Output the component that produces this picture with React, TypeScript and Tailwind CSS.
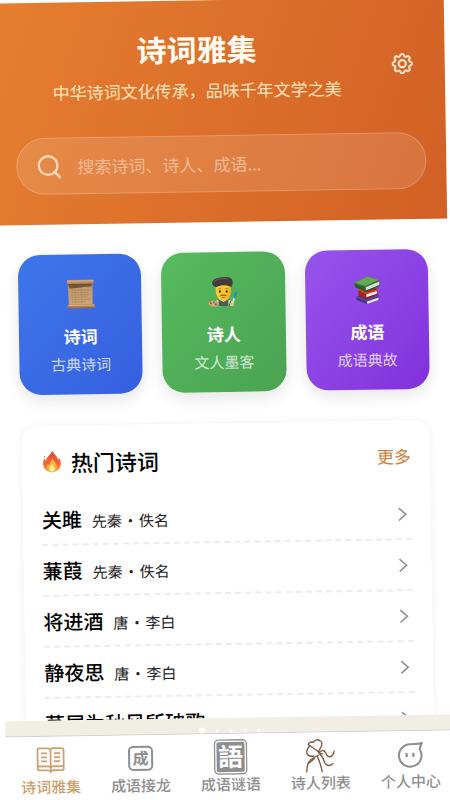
import type { ReactNode } from "react";
import { Search } from "lucide-react";
import { BsGear } from "react-icons/bs";

const ScrollIcon = () => (
  <svg viewBox="0 0 32 32" className="h-8 w-8" aria-hidden="true">
    <defs>
      <linearGradient id="paper" x1="0" y1="0" x2="0" y2="1">
        <stop offset="0" stopColor="#8a6642" />
        <stop offset="0.25" stopColor="#c39a6c" />
        <stop offset="1" stopColor="#cda478" />
      </linearGradient>
    </defs>
    <path d="M3.500 4h25l-.5 23H4.500z" fill="url(#paper)" />
    <path d="M4 5h24l-1 3.500c-8-.5-12 2-22 1.500z" fill="#5f432a" opacity=".75" />
    <rect x="2.500" y="1.500" width="27" height="4" rx="1.500" fill="#b98d60" />
    <path d="M3 2.700h26" stroke="#dcb68a" strokeWidth=".9" />
    <path
      d="M7 12h18M7 14.300h17M7 16.600h18M7 18.900h16M7 21.200h18M7 23.500h14"
      stroke="#8d6b48"
      strokeWidth=".5"
      strokeDasharray="2 .6 3 .7"
    />
    <rect x="3" y="26" width="27.500" height="4" rx="1.500" fill="#b48355" />
    <path d="M4 27h25.500" stroke="#e0b98d" strokeWidth=".9" />
    <path d="M3.500 29.600h26" stroke="#7b5637" strokeWidth=".7" />
  </svg>
);

const PainterIcon = () => (
  <svg viewBox="0 0 32 32" className="h-8 w-8" aria-hidden="true">
    <path d="M6 30c0-5 4-7 10-7s10 2 10 7z" fill="#dfe6e3" />
    <path d="M11 23l5 3 5-3v7H11z" fill="#47604f" />
    <path d="M8.500 25l2 5M23.500 25l-2 5" stroke="#56705f" strokeWidth="1.200" />
    <path d="M8.800 9c-1.500 8 .5 15 7.200 16C22.700 24 24.700 17 23.200 9z" fill="#fcc62f" />
    <path d="M21 9c1 6 0 12-4 16 6-1.500 7.500-8 6.200-16z" fill="#e99d1e" opacity=".5" />
    <path d="M11 13q1.500-1 3 0M18 13q1.500-1 3 0" fill="none" stroke="#8a5a1c" strokeWidth=".7" />
    <ellipse cx="12.600" cy="15.500" rx="1" ry="1.300" fill="#3c2614" />
    <ellipse cx="19.400" cy="15.500" rx="1" ry="1.300" fill="#3c2614" />
    <path d="M13 20q1.500-1.500 3-.7 1.500-.8 3 .7" fill="none" stroke="#7a4415" strokeWidth="1" />
    <path d="M14.500 21.800h3" stroke="#b0472c" strokeWidth=".9" />
    <path
      d="M5 6.500C5.500 3 11 1 17 1c6 0 9 2 8.500 6 0 2-.7 3.500-1.800 4.200C20 8.600 13 8.800 9.500 11 7 10.500 4.600 8.700 5 6.500z"
      fill="#443a3b"
    />
    <path d="M7 5.500c3-3 10-3.500 14-2.500" stroke="#6c6061" fill="none" />
    <ellipse cx="6" cy="27.500" rx="5" ry="3" fill="#d8a56b" />
    <circle cx="3.500" cy="27" r="1" fill="#d04031" />
    <circle cx="6.500" cy="26" r="1" fill="#4a82bd" />
    <circle cx="8.300" cy="28" r="1" fill="#6f4b8a" />
    <path d="M24.500 29.500l3-9" stroke="#dcecf2" strokeWidth="1.800" />
    <path d="M27.200 21.500l1.400-4.500" stroke="#3484c2" strokeWidth="2.200" strokeLinecap="round" />
    <circle cx="24.500" cy="28" r="1.700" fill="#f4bb3b" />
  </svg>
);

const BooksIcon = () => (
  <svg viewBox="0 0 32 32" className="h-8 w-8" aria-hidden="true">
    <path d="M6 23l9-4 13 3v4l-12 4-10-4z" fill="#45337f" />
    <path d="M16 28l12-4v2.500L17 30z" fill="#e8e4e2" />
    <path d="M6 23l10 3.500L28 22" fill="none" stroke="#6753a5" />
    <path d="M8 15l9-2 10 2v6.500L16 25 8 22z" fill="#a3241f" />
    <path d="M16 20.500l10.500-3v3.300L16 24z" fill="#efebe8" />
    <path d="M8 15.500l8 4 11-3.300" fill="none" stroke="#d94b38" strokeWidth="1.300" />
    <path d="M16 23.900l11-3.200" stroke="#7d1815" />
    <path d="M4 9L17.500 2.500 29 6.500v6L15.500 17.500 5 13.500z" fill="#275f2b" />
    <path d="M4 9L17.500 2.500 29 6.500 15 12.500z" fill="#65a955" />
    <path d="M15.500 13.500L29 8v3.500L16 16.500z" fill="#f0eeea" />
    <path d="M15.500 15.200L28.500 10" stroke="#b9b6b0" strokeWidth=".6" />
    <path d="M4 9l11 3.700v5" fill="none" stroke="#3f853b" />
    <path d="M15 17.600l14-5.300" stroke="#245728" />
  </svg>
);

const FlameIcon = () => (
  <svg viewBox="0 0 24 24" className="h-6 w-6" aria-hidden="true">
    <defs>
      <linearGradient id="flame" x1="0" y1="0" x2="0" y2="1">
        <stop offset="0" stopColor="#d9483a" />
        <stop offset="0.6" stopColor="#f0692f" />
        <stop offset="1" stopColor="#f9a23a" />
      </linearGradient>
    </defs>
    <path
      d="M11.500 1c1 3 5 5 5.800 9.500.6-.6.8-1.600.6-2.600 1.600 2 2.200 4.300 1.900 6.800-.5 4.600-4.200 7.800-8.800 7.800s-8.400-3-8.800-7.500C1.900 12 3 9.500 4 8.500c.1 1.300.4 2.300 1.200 3C5 7 9.800 5.500 11.500 1z"
      fill="url(#flame)"
    />
    <path d="M3 5.800c.8.200 1.200.8 1 1.700-.8-.3-1.200-.9-1-1.700z" fill="#e0543b" />
    <path
      d="M11.500 8c0 3 4.300 4.500 4.300 9 0 3.300-2.200 5-4.900 5s-5-1.800-5-4.700c0-1.500.5-2.600 1.200-3.400.2 1 .7 1.600 1.400 1.900-.4-3.300 2.700-4.300 3-7.800z"
      fill="#fbb53f"
    />
    <path d="M11 14c.3 2 2.400 2.600 2.400 5 0 1.900-1.100 2.800-2.500 2.800S8.300 20.800 8.300 19c0-2 2.400-2.700 2.700-5z" fill="#fff0a3" />
  </svg>
);

const BookNavIcon = () => (
  <svg viewBox="0 0 30 30" className="h-[30px] w-[30px]" fill="none" stroke="currentColor" strokeWidth="1.800" aria-hidden="true">
    <path d="M15 4.500v21M15 4.500q-1-1-2.500-1H3.500a1.500 1.500 0 0 0-1.500 1.500v19a1.500 1.500 0 0 0 1.500 1.500h8.700q2 0 2.800 1.500 .8-1.500 2.800-1.500h8.700a1.500 1.500 0 0 0 1.500-1.500v-19a1.500 1.500 0 0 0-1.500-1.500h-9q-1.500 0-2.500 1z" />
    <path d="M5.500 8.500h6M5.500 12.500h6M5.500 16.500h6M18.500 8.500h6M18.500 12.500h6M18.500 16.500h6M2 21.500h10q2 0 3 1 1-1 3-1h10" />
  </svg>
);

const ChengNavIcon = () => (
  <svg viewBox="0 0 28 28" className="h-7 w-7" fill="none" stroke="currentColor" aria-hidden="true">
    <rect x="2.500" y="2.500" width="23" height="23" rx="4" strokeWidth="2" />
    <text x="14" y="20" textAnchor="middle" fontSize="16" fontWeight="700" fill="currentColor" stroke="none">
      成
    </text>
  </svg>
);

const SealNavIcon = () => (
  <svg viewBox="0 0 34 36" className="h-9 w-[34px]" fill="none" stroke="currentColor" aria-hidden="true">
    <rect x="1" y="1" width="32" height="34" rx="4" strokeWidth="1.300" />
    <rect x="3" y="3" width="28" height="30" rx="2" fill="currentColor" stroke="none" />
    <text x="17" y="27" textAnchor="middle" fontSize="25" fontWeight="700" fill="#fff" stroke="none">
      語
    </text>
  </svg>
);

const PoetNavIcon = () => (
  <svg
    viewBox="50 50 90 102"
    className="h-[34px] w-[30px]"
    fill="none"
    stroke="#7d5640"
    strokeWidth="4"
    strokeLinecap="round"
    strokeLinejoin="round"
    aria-hidden="true"
  >
    <path d="M59 68C58 60 68 59 74 61C78 52 90 52 93 57C99 57 101 64 98 72C96 80 89 84 89 92" />
    <path d="M59 68L82 84C90 90 92 96 101 96" />
    <path d="M63 72C56 78 53 86 54 94C57 101 64 104 74 102" />
    <path d="M90 93C96 85 106 83 110 92C113 101 119 108 126 104C133 101 135 95 136 88" />
    <path d="M91 96C103 103 103 112 107 123C111 133 122 134 131 126" />
    <path d="M88 100C74 106 60 112 57 124C53 134 53 142 53 150" />
    <path d="M58 124L76 110" />
    <path d="M85 103C92 118 96 132 99 150" />
  </svg>
);

const ProfileNavIcon = () => (
  <svg
    viewBox="0 0 28 28"
    className="h-7 w-7"
    fill="none"
    stroke="currentColor"
    strokeWidth="2"
    strokeLinejoin="round"
    aria-hidden="true"
  >
    <path d="M13 4h5q4 0 7.500-1-1.500 2.500-2.500 6A11.300 11.300 0 1 1 13 4z" />
    <path d="M10 13.800v2M16.800 13.800v2" strokeWidth="2.400" strokeLinecap="round" />
  </svg>
);

const categories: { title: string; desc: string; icon: ReactNode; color: string }[] = [
  { title: "诗词", desc: "古典诗词", icon: <ScrollIcon />, color: "from-[#3f76ea] to-[#365fe0]" },
  { title: "诗人", desc: "文人墨客", icon: <PainterIcon />, color: "from-[#56bb5e] to-[#4aa352]" },
  { title: "成语", desc: "成语典故", icon: <BooksIcon />, color: "from-[#9853ec] to-[#8130dc]" },
];

const poems = [
  { title: "关雎", dynasty: "先秦", author: "佚名" },
  { title: "蒹葭", dynasty: "先秦", author: "佚名" },
  { title: "将进酒", dynasty: "唐", author: "李白" },
  { title: "静夜思", dynasty: "唐", author: "李白" },
  { title: "茅屋为秋风所破歌" },
];

const tabs = [
  { label: "诗词雅集", icon: <BookNavIcon />, active: true },
  { label: "成语接龙", icon: <ChengNavIcon /> },
  { label: "成语谜语", icon: <SealNavIcon /> },
  { label: "诗人列表", icon: <PoetNavIcon /> },
  { label: "个人中心", icon: <ProfileNavIcon /> },
];

const Header = () => (
  <header className="bg-linear-[110deg] from-[#e67f30] to-[#d26025] px-5 pt-[30px] pb-[30px]">
    <div className="flex items-center">
      <div className="flex-1 text-center">
        <h1 className="text-[30px] leading-9 font-bold text-[#fffaf2]">诗词雅集</h1>
        <p className="mt-3 text-[17px] leading-6 text-[#fde3bd]">中华诗词文化传承，品味千年文学之美</p>
      </div>
      <button type="button" aria-label="设置" className="flex h-12 w-[46px] items-center justify-center text-[#fff3e2]">
        <BsGear size={21} strokeWidth={0.5} />
      </button>
    </div>
    <form className="mt-[33px] flex h-[57px] items-center gap-3.5 rounded-full border border-white/20 bg-white/12 px-[18px]">
      <label htmlFor="search" aria-label="搜索" className="text-[#fad9bb]">
        <Search size={28} strokeWidth={2} />
      </label>
      <input
        id="search"
        type="search"
        placeholder="搜索诗词、诗人、成语..."
        className="min-w-0 flex-1 bg-transparent text-[17px] text-white outline-none placeholder:text-[#f3b995]"
      />
    </form>
  </header>
);

const Categories = () => (
  <div className="grid grid-cols-3 gap-5">
    {categories.map((item) => (
      <button
        key={item.title}
        type="button"
        className={`flex flex-col items-center rounded-[22px] bg-linear-to-br pt-6 pb-5 text-white shadow-[0_6px_16px_rgba(0,0,0,0.1)] ${item.color}`}
      >
        {item.icon}
        <span className="mt-3.5 text-[17px] leading-6 font-bold">{item.title}</span>
        <span className="mt-1.5 text-[15px] leading-5 text-white/75">{item.desc}</span>
      </button>
    ))}
  </div>
);

const PopularPoems = () => (
  <section className="mt-[30px] rounded-2xl border border-[#f7f7f8] bg-white px-[19px] pt-[18px] shadow-[0_2px_10px_rgba(0,0,0,0.05)]">
    <div className="flex items-center justify-between">
      <h2 className="flex items-center gap-1.5 text-[22px] leading-9 font-medium text-black">
        <FlameIcon />
        热门诗词
      </h2>
      <a href="#more" className="text-[17px] text-[#cf7f3c]">
        更多
      </a>
    </div>
    <ul className="mt-[15px]">
      {poems.map((poem) => (
        <li key={poem.title} className="border-b-2 border-dashed border-[#ececec]">
          <a href="#poem" className="flex h-[49px] items-center justify-between">
            <span className="flex items-baseline gap-2.5 text-black">
              <span className="text-[20px] font-medium">{poem.title}</span>
              {poem.author && (
                <span className="flex gap-px text-[15px] text-[#222]">
                  <span>{poem.dynasty}</span>
                  <span>·</span>
                  <span>{poem.author}</span>
                </span>
              )}
            </span>
            <svg viewBox="0 0 20 20" className="h-5 w-5" fill="none" stroke="#8f8f99" strokeWidth="1.600" aria-hidden="true">
              <path d="M7 3.800L14 10l-7 6.200" />
            </svg>
          </a>
        </li>
      ))}
    </ul>
  </section>
);

const TabBar = () => (
  <footer className="shrink-0">
    <div className="flex h-4 items-end justify-center gap-2.5 border-b border-[#d3d0ce] bg-[#f1eee5]">
      <span className="h-1.5 w-1.5 rounded-full bg-white" />
      <span className="h-1 w-1 rounded-full bg-white/60" />
      <span className="h-1 w-1 rounded-full bg-white/50" />
      <span className="h-1 w-1 rounded-full bg-white/50" />
      <span className="h-1 w-1 rounded-full bg-white/50" />
    </div>
    <nav className="grid grid-cols-5 bg-white pt-1.5 pb-1.5">
      {tabs.map((tab) => (
        <a
          key={tab.label}
          href="#tab"
          className={`flex flex-col items-center text-[15px] leading-5 font-medium ${tab.active ? "text-[#cfa06c]" : "text-[#8e8e8e]"}`}
        >
          <span className="flex h-[34px] items-center">{tab.icon}</span>
          {tab.label}
        </a>
      ))}
    </nav>
  </footer>
);

export default function App() {
  return (
    <div className="h-screen overflow-hidden bg-white font-['Noto_Sans_CJK_SC',sans-serif]">
      <div className="flex h-full -rotate-[0.9deg] flex-col bg-white">
        <Header />
        <main className="min-h-0 flex-1 overflow-hidden px-5 pt-[30px]">
          <Categories />
          <PopularPoems />
        </main>
        <TabBar />
      </div>
    </div>
  );
}
